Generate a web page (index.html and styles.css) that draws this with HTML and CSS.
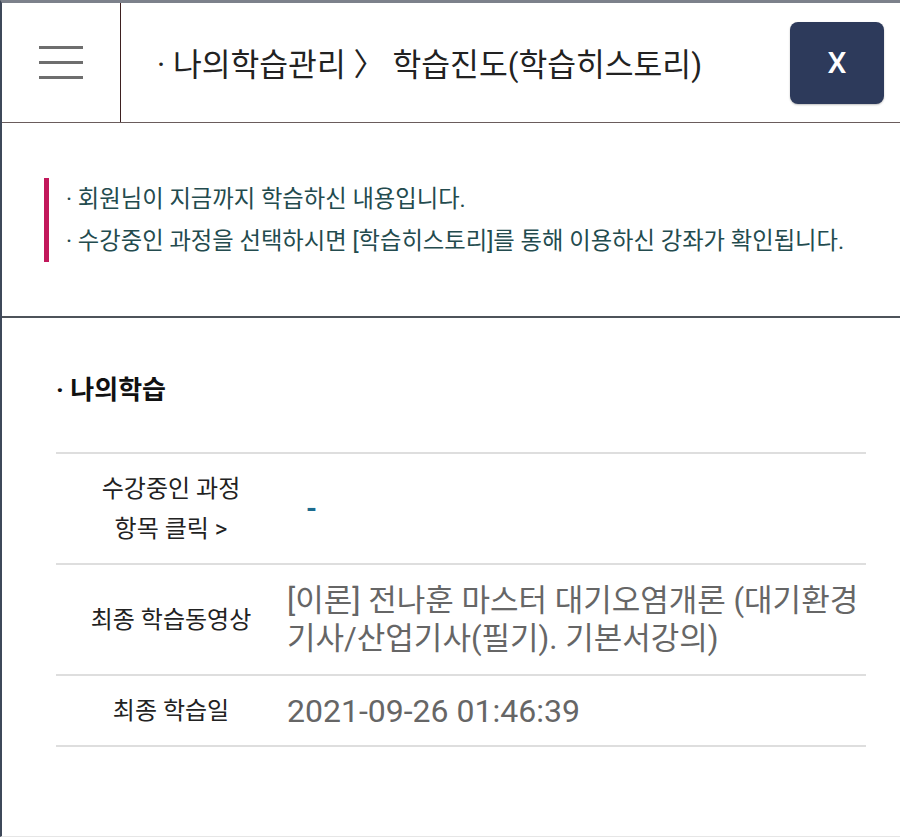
FILE: index.html
```html
<!DOCTYPE html>
<html lang="ko">
<head>
<meta charset="utf-8">
<title>학습진도(학습히스토리)</title>
<link rel="stylesheet" href="styles.css">
</head>
<body>
<div class="page">
  <header class="topbar">
    <div class="menu-cell">
      <span class="burger"><i></i><i></i><i></i></span>
    </div>
    <div class="title">· 나의학습관리 〉 학습진도(학습히스토리)</div>
    <button class="close" type="button">X</button>
  </header>

  <section class="notice">
    <div class="notice-box">
      <p>· 회원님이 지금까지 학습하신 내용입니다.</p>
      <p>· 수강중인 과정을 선택하시면 [학습히스토리]를 통해 이용하신 강좌가 확인됩니다.</p>
    </div>
  </section>

  <section class="mylearn">
    <h2>· 나의학습</h2>
    <div class="table">
      <div class="row">
        <div class="th">수강중인 과정<br>항목 클릭 &gt;</div>
        <div class="td"><a class="dash">-</a></div>
      </div>
      <div class="row">
        <div class="th">최종 학습동영상</div>
        <div class="td">[이론] 전나훈 마스터 대기오염개론 (대기환경기사/산업기사(필기). 기본서강의)</div>
      </div>
      <div class="row">
        <div class="th">최종 학습일</div>
        <div class="td date">2021-09-26 01:46:39</div>
      </div>
    </div>
  </section>
</div>
</body>
</html>
```

FILE: styles.css
```css
html, body {
  margin: 0;
  padding: 0;
  background: #fff;
}
body {
  font-family: Roboto, "Noto Sans CJK KR", sans-serif;
  color: #222;
}
.page {
  box-sizing: border-box;
  min-height: 837px;
  border-top: 3px solid #7c818b;
  border-left: 2px solid #3e4859;
  border-bottom: 1px solid #e6e6e6;
}

/* top bar */
.topbar {
  display: flex;
  align-items: center;
  height: 119px;
  border-bottom: 1px solid #6a5c5c;
}
.menu-cell {
  width: 118px;
  align-self: stretch;
  border-right: 1px solid #3e2020;
  display: flex;
  align-items: center;
  justify-content: center;
}
.burger {
  width: 44px;
  display: flex;
  flex-direction: column;
  gap: 12px;
}
.burger i {
  display: block;
  height: 3px;
  background: #6e6e6e;
}
.title {
  flex: 1;
  padding-left: 36px;
  font-size: 31.3px;
  color: #222;
  white-space: nowrap;
}
.close {
  width: 94px;
  height: 82px;
  margin-right: 16px;
  background: #2d3a5b;
  border: none;
  border-radius: 8px;
  color: #fff;
  font-family: Roboto, sans-serif;
  font-size: 30px;
  font-weight: 500;
  box-shadow: 0 1px 2px rgba(0,0,0,0.25);
}

/* notice */
.notice {
  padding: 55px 0 54px 42px;
  border-bottom: 2px solid #4e535a;
}
.notice-box {
  border-left: 5px solid #c2185b;
  padding-left: 17px;
}
.notice-box p {
  margin: 0;
  font-size: 23.3px;
  line-height: 42px;
  color: #234b4e;
}

/* my learning */
.mylearn {
  padding: 55px 34px 0 54px;
}
.mylearn h2 {
  margin: 0 0 45px;
  font-size: 26px;
  font-weight: 700;
  line-height: 34px;
  color: #111;
}
.table {
  border-top: 2px solid #dedede;
}
.row {
  display: grid;
  grid-template-columns: 230px 1fr;
  align-items: center;
  border-bottom: 2px solid #dedede;
}
.th {
  padding: 14.5px 0;
  text-align: center;
  font-size: 24px;
  line-height: 40px;
  color: #222;
}
.td {
  padding: 16.5px 0 16.5px 1px;
  font-size: 31px;
  line-height: 38px;
  color: #666;
}
.td.date {
  padding: 15px 0 15px 1px;
  font-size: 32px;
}
.dash {
  padding-left: 19px;
  color: #1c6b8e;
  font-weight: 700;
  font-size: 28px;
}
```
